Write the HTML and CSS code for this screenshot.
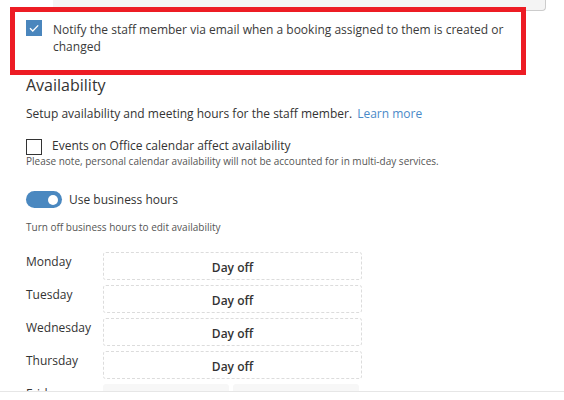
FILE: index.html
```html
<!DOCTYPE html>
<html>
<head>
<meta charset="utf-8">
<link rel="stylesheet" href="styles.css">
</head>
<body>
<div class="viewport">
  <div class="scroll">
    <div class="topbox"></div>
    <div class="notify">
      <span class="check checked">
        <svg width="16" height="16" viewBox="0 0 16 16"><path d="M4 8.2 L6.8 11 L12.2 5.4" fill="none" stroke="#fff" stroke-width="1.3"/></svg>
      </span>
      <span class="notify-text">Notify the staff member via email when a booking assigned to them is created or changed</span>
    </div>
    <div class="section">
      <h2 class="title">Availability</h2>
      <p class="desc">Setup availability and meeting hours for the staff member. <a class="link">Learn more</a></p>
      <div class="row-check">
        <span class="check"></span>
        <span class="label">Events on Office calendar affect availability</span>
      </div>
      <p class="note">Please note, personal calendar availability will not be accounted for in multi-day services.</p>
      <div class="toggle-row">
        <span class="toggle"><span class="knob"></span></span>
        <span class="label">Use business hours</span>
      </div>
      <p class="note hint">Turn off business hours to edit availability</p>
      <div class="days">
        <div class="day"><span class="dname">Monday</span><span class="slot">Day off</span></div>
        <div class="day"><span class="dname">Tuesday</span><span class="slot">Day off</span></div>
        <div class="day"><span class="dname">Wednesday</span><span class="slot">Day off</span></div>
        <div class="day"><span class="dname">Thursday</span><span class="slot">Day off</span></div>
        <div class="day"><span class="dname">Friday</span><span class="slots"><span class="gslot"></span><span class="gslot"></span></span></div>
      </div>
    </div>
  </div>
  <div class="footer"></div>
</div>
</body>
</html>
```
FILE: styles.css
```css
html, body {
  margin: 0;
  padding: 0;
  background: #fff;
}
body {
  font-family: "Open Sans", "Noto Sans", sans-serif;
  color: #333;
  font-size: 12px;
}
.viewport {
  width: 564px;
  height: 400px;
  overflow: hidden;
  display: flex;
  flex-direction: column;
}
.scroll {
  height: 391px;
  overflow: hidden;
  flex: none;
}
.footer {
  flex: 1;
  border-top: 1px solid #e6e6e6;
  background: #fff;
}
.topbox {
  margin-left: 53px;
  width: 492px;
  height: 10px;
  background: #f4f4f4;
  border-right: 1px solid #ccc;
  border-bottom: 1px solid #ccc;
  border-bottom-right-radius: 4px;
}
.notify {
  margin-top: -4px;
  margin-left: 10px;
  width: 506px;
  height: 58px;
  border: 5px solid #ed1c24;
  box-sizing: content-box;
  display: flex;
  align-items: flex-start;
  padding: 0;
}
.notify .check {
  margin: 8px 0 0 11px;
}
.notify-text {
  margin-left: 11px;
  margin-top: 9px;
  width: 470px;
  line-height: 17px;
  font-size: 12px;
  color: #3a3a3a;
}
.check {
  flex: none;
  width: 16px;
  height: 16px;
  box-sizing: border-box;
  border: 1px solid #333;
  background: #fff;
  display: inline-flex;
  align-items: center;
  justify-content: center;
}
.check.checked {
  border: none;
  background: #4a86bd;
}
.section {
  padding-left: 26px;
}
.title {
  margin: -1px 0 0;
  padding: 0;
  font-size: 16px;
  font-weight: 400;
  line-height: 22px;
  color: #333;
}
.desc {
  margin: 9px 0 0;
  line-height: 17px;
  font-size: 12px;
}
.link {
  color: #4a89c8;
  margin-left: 2px;
}
.row-check {
  margin-top: 16px;
  display: flex;
  align-items: center;
  height: 17px;
}
.row-check .label {
  margin-left: 10px;
  font-size: 12px;
  line-height: 14px;
  margin-top: -1px;
}
.note {
  margin: 0;
  font-size: 10px;
  line-height: 12px;
  color: #555;
}
.toggle-row {
  margin-top: 24px;
  display: flex;
  align-items: center;
  height: 17px;
}
.toggle {
  width: 36px;
  height: 17px;
  border-radius: 9px;
  background: #4a88c0;
  display: inline-flex;
  align-items: center;
  justify-content: flex-end;
  padding-right: 4px;
  box-sizing: border-box;
}
.knob {
  width: 10px;
  height: 10px;
  border-radius: 50%;
  background: #fff;
}
.toggle-row .label {
  margin-left: 7px;
  font-size: 12px;
}
.hint {
  margin-top: 13px;
}
.days {
  margin-top: 19px;
  display: flex;
  flex-direction: column;
  gap: 5px;
}
.day {
  display: flex;
  align-items: flex-start;
  height: 28px;
}
.dname {
  width: 77px;
  font-size: 12px;
  line-height: 16px;
  margin-top: 2px;
}
.slot {
  width: 259px;
  height: 28px;
  box-sizing: border-box;
  border: 1px dashed #dcdcdc;
  border-radius: 3px;
  display: flex;
  align-items: center;
  justify-content: center;
  font-size: 12px;
  font-weight: 600;
  padding-top: 2px;
  color: #333;
}
.slots {
  display: flex;
  gap: 4px;
}
.gslot {
  width: 126px;
  height: 28px;
  background: #f7f7f7;
  border-radius: 3px;
}
```
